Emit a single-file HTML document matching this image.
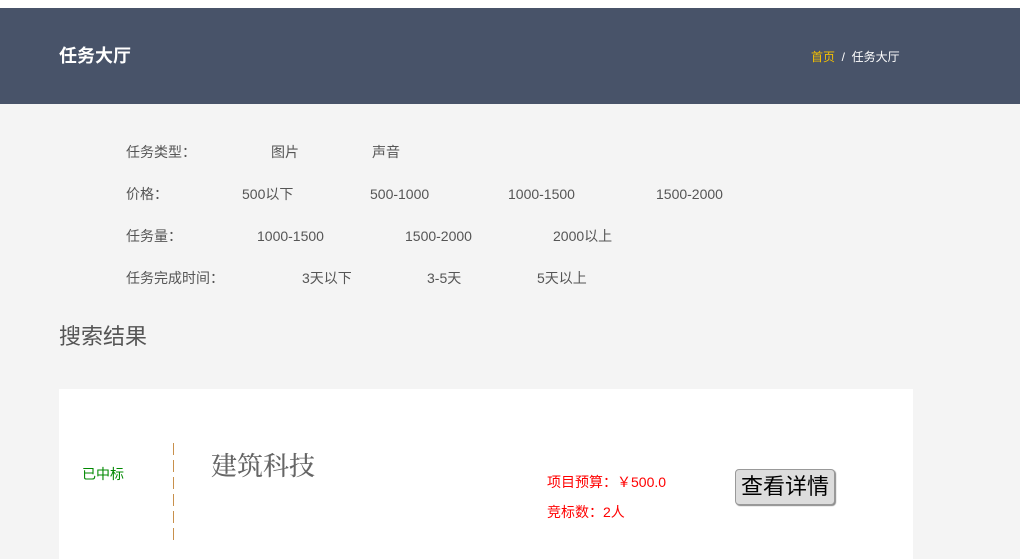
<!DOCTYPE html>
<html><head><meta charset="utf-8"><style>
*{margin:0;padding:0;box-sizing:border-box}
body{width:1020px;height:552px;overflow:hidden;background:#f4f4f4;font-family:"Liberation Sans","Noto Sans CJK SC",sans-serif;position:relative}
.top{position:absolute;left:0;top:0;width:1020px;height:8px;background:#fff}
.hd{position:absolute;left:0;top:8px;width:1020px;height:96px;background:#485369}
.hd h1{position:absolute;left:59px;top:34px;font-size:18px;color:#fff;font-weight:bold}
.bc{position:absolute;left:811px;top:40px;font-size:12px;color:#fff}
.bc span{color:#f5c000}
.t{position:absolute;font-size:14px;line-height:18px;height:18px;color:#555;white-space:nowrap}
.res{position:absolute;left:59px;top:319px;font-size:22px;color:#555}
.card{position:absolute;left:59px;top:389px;width:854px;height:170px;background:#fff}
.dash{position:absolute;left:173px;top:443px;height:98px;width:1px;background:repeating-linear-gradient(to bottom,#c8904c 0 12px,transparent 12px 17px)}
.red{position:absolute;font-size:14px;line-height:18px;color:#f00}
.btn{position:absolute;left:735px;top:469px;width:100px;height:36px;background:#ddd;border:1px solid #999;border-radius:4px;font-size:22px;color:#000;text-align:center;line-height:34px;box-shadow:1px 1px 1px #888}
</style></head><body>
<div class="top"></div>
<div class="hd"><h1>任务大厅</h1><div class="bc"><span>首页</span> &nbsp;/&nbsp; 任务大厅</div></div>
<div class="t" style="left:126px;top:143px">任务类型：</div>
<div class="t" style="left:271px;top:143px">图片</div>
<div class="t" style="left:372px;top:143px">声音</div>
<div class="t" style="left:126px;top:185px">价格：</div>
<div class="t" style="left:242px;top:185px">500以下</div>
<div class="t" style="left:370px;top:185px">500-1000</div>
<div class="t" style="left:508px;top:185px">1000-1500</div>
<div class="t" style="left:656px;top:185px">1500-2000</div>
<div class="t" style="left:126px;top:227px">任务量：</div>
<div class="t" style="left:257px;top:227px">1000-1500</div>
<div class="t" style="left:405px;top:227px">1500-2000</div>
<div class="t" style="left:553px;top:227px">2000以上</div>
<div class="t" style="left:126px;top:269px">任务完成时间：</div>
<div class="t" style="left:302px;top:269px">3天以下</div>
<div class="t" style="left:427px;top:269px">3-5天</div>
<div class="t" style="left:537px;top:269px">5天以上</div>
<div class="res">搜索结果</div>
<div class="card"></div>
<div class="t" style="left:82px;top:465px;color:#080">已中标</div>
<div class="dash"></div>
<div style="position:absolute;left:211px;top:446px;font-size:26px;color:#666;font-weight:500;font-family:'Noto Serif CJK SC',serif">建筑科技</div>
<div class="red" style="left:547px;top:473px">项目预算：￥500.0</div>
<div class="red" style="left:547px;top:503px">竞标数：2人</div>
<div class="btn">查看详情</div>
</body></html>
